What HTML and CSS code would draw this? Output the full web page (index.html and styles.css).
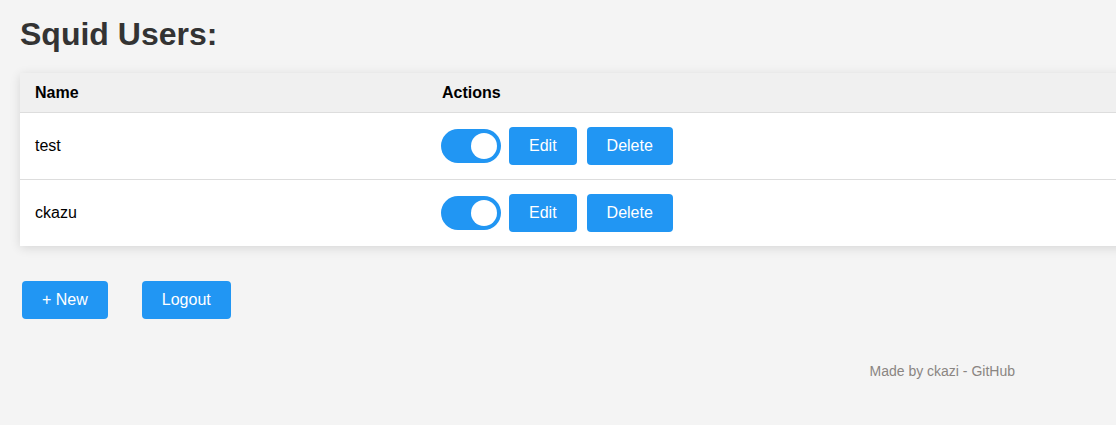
FILE: index.html
```html
<!DOCTYPE html>
<html>
<head>
<meta charset="utf-8">
<title>Squid Users</title>
<link rel="stylesheet" href="styles.css">
</head>
<body>
<main class="page">
  <h1 class="title">Squid Users:</h1>
  <table class="users">
    <thead>
      <tr><th class="col-name">Name</th><th>Actions</th></tr>
    </thead>
    <tbody>
      <tr>
        <td class="col-name">test</td>
        <td>
          <div class="actions">
            <label class="switch"><input type="checkbox" checked><span class="slider"></span></label>
            <button class="btn">Edit</button>
            <button class="btn">Delete</button>
          </div>
        </td>
      </tr>
      <tr>
        <td class="col-name">ckazu</td>
        <td>
          <div class="actions">
            <label class="switch"><input type="checkbox" checked><span class="slider"></span></label>
            <button class="btn">Edit</button>
            <button class="btn">Delete</button>
          </div>
        </td>
      </tr>
    </tbody>
  </table>
  <div class="bottom-actions">
    <button class="btn">+ New</button>
    <button class="btn">Logout</button>
  </div>
  <footer class="footer">Made by ckazi - <a class="footer-link" href="#">GitHub</a></footer>
</main>
</body>
</html>
```

FILE: styles.css
```css
html, body {
  margin: 0;
  padding: 0;
  background: #f4f4f4;
  overflow: hidden;
}

body {
  font-family: "Liberation Sans", Arial, sans-serif;
  font-size: 16px;
  color: #000;
}

.page {
  padding: 16px 20px 20px 20px;
}

.title {
  margin: 0 0 20px 0;
  font-size: 32px;
  font-weight: bold;
  color: #333;
  line-height: normal;
}

.users {
  width: 1200px;
  border-collapse: collapse;
  background: #fff;
  box-shadow: 0 2px 10px rgba(0, 0, 0, 0.12);
}

.users th {
  background: #f0f0f0;
  text-align: left;
  font-weight: bold;
  padding: 11px 15px 10px 15px;
  line-height: 18px;
  border-bottom: 1px solid #ddd;
}

.users td {
  padding: 14px 15px;
  border-bottom: 1px solid #ddd;
  vertical-align: middle;
}

.users tbody tr:last-child td {
  border-bottom: none;
}

.col-name {
  width: 377px;
}

.actions {
  display: flex;
  align-items: center;
}

.switch {
  position: relative;
  display: inline-block;
  width: 60px;
  height: 34px;
  margin-left: -1px;
  margin-right: 8px;
}

.switch input {
  opacity: 0;
  width: 0;
  height: 0;
}

.slider {
  position: absolute;
  inset: 0;
  background: #2196f3;
  border-radius: 34px;
}

.slider::before {
  content: "";
  position: absolute;
  width: 26px;
  height: 26px;
  left: 30px;
  top: 4px;
  background: #fff;
  border-radius: 50%;
}

.btn {
  font-family: "Liberation Sans", Arial, sans-serif;
  font-size: 16px;
  line-height: 18px;
  color: #fff;
  background: #2196f3;
  border: none;
  border-radius: 4px;
  padding: 10px 20px;
  cursor: pointer;
}

.actions .btn + .btn {
  margin-left: 10px;
}

.bottom-actions {
  display: flex;
  gap: 34px;
  margin: 35px 0 0 2px;
}

.footer {
  margin-top: 44px;
  text-align: right;
  padding-right: 81px;
  font-size: 14px;
  line-height: 16px;
  color: #8a8582;
}

.footer-link {
  color: #8a8582;
  text-decoration: none;
}
```
